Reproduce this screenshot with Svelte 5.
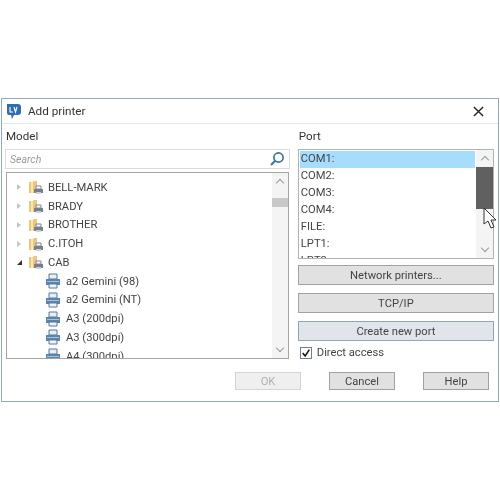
<script>
  const brands = [
    { name: "BELL-MARK", open: false },
    { name: "BRADY", open: false },
    { name: "BROTHER", open: false },
    { name: "C.ITOH", open: false },
    { name: "CAB", open: true },
  ];
  const printers = ["a2 Gemini (98)", "a2 Gemini (NT)", "A3 (200dpi)", "A3 (300dpi)", "A4 (300dpi)"];
  const ports = ["COM1:", "COM2:", "COM3:", "COM4:", "FILE:", "LPT1:", "LPT2:"];
</script>

<main class="dialog">
  <header class="title-bar">
    <svg class="app-icon" viewBox="0 0 18 18" width="18" height="18">
      <path d="M2 2h11q3 0 3 3v5q0 3-3 3H9l-2 4-1-4H4q-2 0-2-2z" fill="#2f6db0" />
      <path d="M5 5v5h3M9 5l1.5 5L12 5" fill="none" stroke="#fff" stroke-width="1.1" />
    </svg>
    <span class="title">Add printer</span>
    <svg class="close" viewBox="0 0 12 12" width="11" height="11">
      <path d="M1 1l10 10M11 1L1 11" stroke="#222" stroke-width="1.5" />
    </svg>
  </header>

  <div class="body">
    <section class="model-col">
      <div class="label">Model</div>
      <div class="search">
        <span class="placeholder">Search</span>
        <svg viewBox="0 0 16 16" width="16" height="16">
          <circle cx="9.5" cy="6.5" r="4.6" fill="none" stroke="#3f7396" stroke-width="1.7" />
          <path d="M6 10l-4 4" stroke="#3f7396" stroke-width="2.2" />
        </svg>
      </div>
      <div class="tree">
        <div class="tree-rows">
          {#each brands as brand}
            <div class="row">
              {#if brand.open}
                <span class="arrow-open"></span>
              {:else}
                <span class="arrow-closed"></span>
              {/if}
              <svg class="row-icon folder" viewBox="0 0 16 16" width="16" height="16">
                <path d="M1 3h4l1-1h3v12H1z" fill="#edc677" />
                <path d="M3 3h2v11H3z" fill="#f7e6b8" />
                <path d="M8 7h5v3H8z" fill="#fff" stroke="#7c8590" />
                <path d="M6 10h9v4H6z" fill="#77808a" />
                <path d="M8 13h5v2H8z" fill="#ccd2d8" />
              </svg>
              <span>{brand.name}</span>
            </div>
          {/each}
          {#each printers as printer}
            <div class="row child">
              <svg class="row-icon" viewBox="0 0 16 16" width="16" height="16">
                <path d="M4 1h8v5H4z" fill="#e8eef4" stroke="#55789c" />
                <path d="M1 6h14v6H1z" fill="#5b83ab" />
                <path d="M2 8h12v1H2z" fill="#a9c3da" />
                <path d="M4 11h8v4H4z" fill="#f2f5f8" stroke="#55789c" />
              </svg>
              <span>{printer}</span>
            </div>
          {/each}
        </div>
        <div class="scrollbar">
          <span class="chev up"></span>
          <span class="thumb"></span>
          <span class="chev down"></span>
        </div>
      </div>
    </section>

    <section class="port-col">
      <div class="label">Port</div>
      <div class="ports">
        <div class="port-rows">
          {#each ports as port, i}
            <div class="port" class:selected={i === 0}>{port}</div>
          {/each}
        </div>
        <div class="scrollbar port-scroll">
          <span class="chev up"></span>
          <span class="thumb dark"></span>
          <span class="chev down"></span>
        </div>
        <svg class="cursor" viewBox="0 0 14 22" width="14" height="22">
          <path d="M1 1v16l4-3 3 7 3-1-3-7h5z" fill="#fff" stroke="#333" stroke-width="1" />
        </svg>
      </div>
      <div class="port-actions">
        <button type="button">Network printers...</button>
        <button type="button">TCP/IP</button>
        <button type="button" class="focused">Create new port</button>
      </div>
      <div class="check-row">
        <span class="checkbox">
          <svg viewBox="0 0 12 12" width="12" height="12">
            <path d="M2 6l3 3.5L10 2" fill="none" stroke="#111" stroke-width="1.8" />
          </svg>
        </span>
        <span>Direct access</span>
      </div>
    </section>
  </div>

  <footer class="footer">
    <button type="button" class="dlg" disabled>OK</button>
    <button type="button" class="dlg">Cancel</button>
    <button type="button" class="dlg">Help</button>
  </footer>
</main>

<style>
  :global(body) {
    margin: 0;
    background: #fff;
  }

  .dialog {
    box-sizing: border-box;
    width: 498px;
    height: 304px;
    margin: 98px 1px 0;
    border: 1.5px solid #8fa9bd;
    background: #fff;
    color: #444;
    font-family: Roboto, sans-serif;
    font-size: 11.2px;
    filter: blur(0.6px);
  }

  .title-bar {
    display: flex;
    align-items: center;
    height: 24px;
    padding: 0 14px 0 3px;
    border-bottom: 1px solid #e6e9ea;
    color: #333;
  }
  .app-icon {
    margin-right: 5px;
  }
  .title {
    flex: 1;
    font-size: 11.7px;
  }

  .body {
    display: flex;
    gap: 8px;
    padding: 0 4px 0 3px;
  }
  .model-col {
    width: 286px;
  }
  .port-col {
    width: 197px;
  }
  .label {
    height: 25px;
    line-height: 24px;
    padding-left: 1px;
    font-size: 11.6px;
    color: #333;
  }

  .search {
    box-sizing: border-box;
    display: flex;
    align-items: center;
    justify-content: space-between;
    height: 20px;
    padding: 0 4px 0 4px;
    border: 1px solid #dcdcdc;
  }
  .placeholder {
    color: #999;
    font-style: italic;
    font-size: 10.5px;
  }

  .tree {
    box-sizing: border-box;
    display: flex;
    width: 283px;
    height: 187px;
    margin: 3px 0 0 1px;
    border: 1px solid #a5a5a5;
    overflow: hidden;
  }
  .tree-rows {
    flex: 1;
    padding: 5px 0 0 10px;
    overflow: hidden;
  }
  .row {
    display: flex;
    align-items: center;
    height: 18.75px;
    white-space: nowrap;
  }
  .row-icon {
    flex: none;
    margin-right: 5px;
  }
  .row-icon.folder {
    margin-right: 4px;
  }
  .row.child {
    padding-left: 28px;
  }
  .arrow-closed,
  .arrow-open {
    flex: none;
    width: 0;
    height: 0;
  }
  .arrow-closed {
    margin-right: 7px;
    border-left: 4px solid #c4c4c4;
    border-top: 3.5px solid transparent;
    border-bottom: 3.5px solid transparent;
  }
  .arrow-open {
    margin-right: 6px;
    border-right: 5px solid #333;
    border-top: 5px solid transparent;
  }

  .scrollbar {
    flex: none;
    display: flex;
    flex-direction: column;
    align-items: center;
    width: 16px;
    background: #f4f4f4;
    padding: 5px 0;
    box-sizing: border-box;
  }
  .scrollbar .thumb {
    width: 100%;
    height: 9px;
    margin-top: 14px;
    background: #c8c8c8;
  }
  .scrollbar .thumb.dark {
    height: 42px;
    margin-top: 6px;
    background: #606060;
  }
  .chev {
    width: 5px;
    height: 5px;
    border-left: 1.5px solid #9a9a9a;
    border-top: 1.5px solid #9a9a9a;
  }
  .chev.up {
    transform: translateY(2px) rotate(45deg);
  }
  .chev.down {
    margin-top: auto;
    transform: translateY(-2px) rotate(225deg);
  }

  .ports {
    position: relative;
    box-sizing: border-box;
    display: flex;
    height: 110px;
    border: 1px solid #a9b4bb;
  }
  .port-rows {
    flex: 1;
    padding: 1px 1px 0 1px;
    overflow: hidden;
  }
  .port {
    height: 17px;
    line-height: 16px;
    padding-left: 1px;
  }
  .port.selected {
    background: #a6dcfd;
  }
  .port-scroll {
    width: 17px;
  }
  .cursor {
    position: absolute;
    right: -4px;
    top: 57px;
  }

  .port-actions {
    display: flex;
    flex-direction: column;
    gap: 8px;
    margin-top: 6px;
  }
  button {
    font: inherit;
    color: #444;
    background: #e1e1e1;
    border: 1px solid #a2a2a2;
    padding: 0;
  }
  .port-actions button {
    height: 20px;
  }
  .port-actions .focused {
    background: #dfe5ea;
    border-color: #8fa6b8;
  }

  .check-row {
    display: flex;
    align-items: center;
    gap: 5px;
    margin-top: 5px;
    padding-left: 2px;
  }
  .checkbox {
    display: flex;
    align-items: center;
    justify-content: center;
    box-sizing: border-box;
    width: 12px;
    height: 12px;
    border: 1px solid #6d7f94;
    background: #fff;
  }

  .footer {
    display: flex;
    justify-content: flex-end;
    gap: 28px;
    padding-right: 9px;
    margin-top: 13px;
  }
  .dlg {
    width: 66px;
    height: 18px;
  }
  .dlg:disabled {
    color: #b0b0b0;
    background: #efefef;
    border-color: #d4d4d4;
  }
</style>
